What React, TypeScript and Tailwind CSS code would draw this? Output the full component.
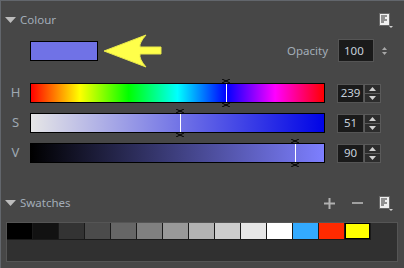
import React from "react";

const swatches = [
  "#000000",
  "#121212",
  "#333333",
  "#4b4b4b",
  "#666666",
  "#808080",
  "#999999",
  "#b3b3b3",
  "#cccccc",
  "#e6e6e6",
  "#ffffff",
  "#33aaff",
  "#ff2a00",
  "#ffff00",
];

function Triangle() {
  return (
    <svg width="11" height="6" viewBox="0 0 11 6" className="shrink-0">
      <polygon points="0,0 11,0 5.5,6" fill="#bcbcbc" />
    </svg>
  );
}

function MenuIcon() {
  return (
    <svg width="14" height="15" viewBox="0 0 14 15" className="shrink-0">
      <rect x="0.5" y="0.5" width="10" height="12" fill="#f0f0f0" stroke="#6a6a6a" />
      <line x1="2" y1="3" x2="8" y2="3" stroke="#333" />
      <line x1="2" y1="5" x2="6" y2="5" stroke="#333" />
      <line x1="2" y1="7" x2="8" y2="7" stroke="#333" />
      <line x1="2" y1="9" x2="5" y2="9" stroke="#333" />
      <polygon points="10,13 14,13 12,15" fill="#cfcfcf" />
    </svg>
  );
}

function Arrow() {
  return (
    <svg width="60" height="34" viewBox="0 0 60 34" className="shrink-0">
      <path
        d="M1 17 L43 1 Q36 9 37 13 L58 13 L58 20 L37 20 Q36 25 43 33 Z"
        fill="#ffff4a"
        stroke="#e8e84a"
        strokeWidth="1"
      />
    </svg>
  );
}

function Cross() {
  return (
    <svg width="8" height="4" viewBox="0 0 8 4" className="block">
      <line x1="0" y1="0" x2="8" y2="4" stroke="#000" />
      <line x1="8" y1="0" x2="0" y2="4" stroke="#000" />
    </svg>
  );
}

function SpinBox({ value }: { value: number }) {
  return (
    <div className="flex ml-[12px]">
      <div className="w-[27px] h-[19px] bg-[#1a1a1a] border border-[#555] flex items-center justify-center text-[#c6d0dc]">
        {value}
      </div>
      <div className="flex flex-col w-[17px] h-[19px]">
        <div className="h-[10px] bg-[#2c2c2c] border border-[#5a5a5a] flex items-center justify-center">
          <svg width="7" height="4" viewBox="0 0 7 4">
            <polygon points="0,4 7,4 3.5,0" fill="#d0d0d0" />
          </svg>
        </div>
        <div className="h-[9px] bg-[#2c2c2c] border border-t-0 border-[#5a5a5a] flex items-center justify-center">
          <svg width="7" height="4" viewBox="0 0 7 4">
            <polygon points="0,0 7,0 3.5,4" fill="#d0d0d0" />
          </svg>
        </div>
      </div>
    </div>
  );
}

function HsvSlider(props: { label: string; value: number; max: number; gradient: string }) {
  // marker position along the 293px inner track
  const pos = Math.round((props.value / props.max) * 293);
  return (
    <div className="flex items-center h-[20px]">
      <div className="w-[29px] text-center text-[13px] text-[#9ea8b2]">{props.label}</div>
      <div className={`relative w-[295px] h-[20px] border border-black ${props.gradient}`}>
        <div className="absolute top-0 bottom-0 w-px bg-white" style={{ left: pos }} />
        <div className="absolute top-[-5px]" style={{ left: pos - 4 }}>
          <Cross />
        </div>
        <div className="absolute bottom-[-5px]" style={{ left: pos - 4 }}>
          <Cross />
        </div>
      </div>
      <SpinBox value={props.value} />
    </div>
  );
}

export default function App() {
  return (
    <div className="w-[404px] h-[268px] bg-[#474747] border-l border-t border-[#62666c] flex flex-col text-[11.5px] text-[#a3adb8] font-['Noto_Sans','Liberation_Sans',sans-serif] overflow-hidden">
      {/* Colour header */}
      <div className="flex items-center mt-[10px] h-[18px] pl-[4px] pr-[11px]">
        <Triangle />
        <span className="ml-[4px]">Colour</span>
        <div className="flex-1" />
        <MenuIcon />
      </div>

      {/* Current colour + opacity */}
      <div className="flex items-center mt-[10px] h-[23px]">
        <div className="ml-[29px] w-[68px] h-[20px] border border-black bg-[#7072e6]" />
        <div className="ml-[5px]">
          <Arrow />
        </div>
        <div className="flex-1" />
        <span>Opacity</span>
        <div className="ml-[10px] w-[36px] h-[23px] bg-[#1a1a1a] border border-[#555] flex items-center pl-[5px] text-[#c6d0dc]">
          100
        </div>
        <div className="ml-[8px] mr-[17px] flex flex-col gap-[2px]">
          <svg width="5" height="3" viewBox="0 0 5 3">
            <polygon points="0,3 5,3 2.5,0" fill="#a8a8a8" />
          </svg>
          <svg width="5" height="3" viewBox="0 0 5 3">
            <polygon points="0,0 5,0 2.5,3" fill="#a8a8a8" />
          </svg>
        </div>
      </div>

      {/* HSV sliders */}
      <div className="flex flex-col gap-[10px] mt-[21px]">
        <HsvSlider label="H" value={239} max={360} gradient="bg-[linear-gradient(to_right,#ff0000,#ffff00,#00ff00,#00ffff,#0000ff,#ff00ff,#ff0000)]" />
        <HsvSlider label="S" value={51} max={100} gradient="bg-[linear-gradient(to_right,#e6e6e6,#0004e6)]" />
        <HsvSlider label="V" value={90} max={100} gradient="bg-[linear-gradient(to_right,#000000,#7d7fff)]" />
      </div>

      {/* Swatches header */}
      <div className="flex items-center mt-[31px] h-[18px] pl-[4px] pr-[11px]">
        <Triangle />
        <span className="ml-[4px]">Swatches</span>
        <div className="flex-1" />
        <svg width="11" height="11" viewBox="0 0 11 11" className="mr-[17px]">
          <rect x="4.5" y="0" width="2" height="11" fill="#b0b0b0" />
          <rect x="0" y="4.5" width="11" height="2" fill="#b0b0b0" />
        </svg>
        <svg width="11" height="3" viewBox="0 0 11 3" className="mr-[16px]">
          <rect x="0" y="0" width="11" height="2" fill="#a0a0a0" />
        </svg>
        <MenuIcon />
      </div>

      {/* Swatch grid */}
      <div className="ml-[5px] mt-[10px] w-[392px] h-[40px] border border-[#555] bg-[#303030]">
        <div className="flex gap-px bg-[#1a1a1a] w-fit pr-px pb-px">
          {swatches.map((c, i) => (
            <div
              key={c}
              className={`w-[25px] h-[16px] ${i === swatches.length - 1 ? "border border-black" : ""}`}
              style={{ backgroundColor: c }}
            />
          ))}
        </div>
      </div>
    </div>
  );
}
